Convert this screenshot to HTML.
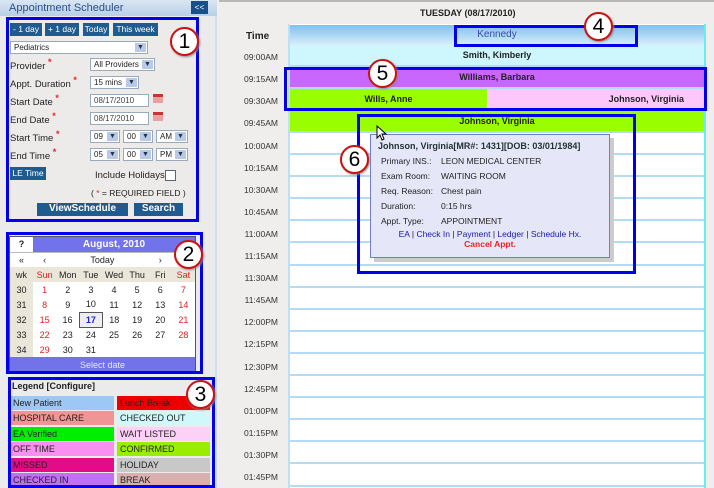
<!DOCTYPE html>
<html><head><meta charset="utf-8"><style>
*{margin:0;padding:0;box-sizing:border-box}
body{width:714px;height:488px;overflow:hidden;position:relative;background:#efeeec;font-family:"Liberation Sans",Arial,sans-serif;font-size:9px;color:#222}
.a{position:absolute}
.btn{position:absolute;background:#1f5b8f;color:#fff;font-size:8.5px;text-align:center;line-height:12px;height:13px}
.sel{position:absolute;background:#fff;border:1px solid #9ab;height:13px;font-size:8px;line-height:11px;padding-left:3px}
.sel i{position:absolute;right:1px;top:1px;width:11px;height:9px;background:#b9c9e8;font-style:normal;font-size:7px;line-height:9px;text-align:center;color:#234}
.lbl{position:absolute;left:10px;font-size:9.5px;color:#222}
.lbl b{color:#e22;font-size:9px;position:relative;top:-4px}
.bx{position:absolute;border:3px solid #0000ee}
.num{position:absolute;width:29px;height:29px;border-radius:50%;background:#fff;border:2px solid #c11;color:#000;font-size:21px;text-align:center;line-height:25px;box-shadow:1px 1px 2px #888}
.row{position:absolute;left:290px;width:414px;height:22px;background:#fff;border-bottom:2px solid #b2dcf2}
.tm{position:absolute;left:230px;width:48px;text-align:right;font-size:8.5px;color:#333}
.cal{table-layout:fixed}
.cal td{border:0;text-align:center;font-size:9px;height:15px;background:#fff}
.cal td.w{background:#ebe6da}
.lg{position:absolute;height:14px;font-size:9px;line-height:14px;padding-left:3px;color:#222}
.tt td{font-size:8.5px;height:15px;color:#222}
a{color:#1a1aa8}
</style></head><body>
<div class="a" style="left:0;top:0;width:217px;height:488px;background:#ebebeb;border-right:2px solid #cfe0ef"></div>
<div class="a" style="left:0;top:0;width:217px;height:16px;background:linear-gradient(#d9e7f4,#b8cfe6);color:#2b4f8c;font-size:11px;line-height:16px;padding-left:9px">Appointment Scheduler</div>
<div class="btn" style="left:191px;top:1px;width:17px;height:13px;background:#17508a">&lt;&lt;</div>
<div class="a" style="left:6px;top:17px;width:192px;height:205px;background:#ecebea"></div>
<div class="btn" style="left:10px;top:23px;width:32px">- 1 day</div>
<div class="btn" style="left:45px;top:23px;width:34px">+ 1 day</div>
<div class="btn" style="left:83px;top:23px;width:26px">Today</div>
<div class="btn" style="left:113px;top:23px;width:45px">This week</div>
<div class="sel" style="left:10px;top:41px;width:138px">Pediatrics<i>▼</i></div>
<div class="lbl" style="top:61px">Provider <b>*</b></div>
<div class="sel" style="left:90px;top:58px;width:65px">All Providers<i>▼</i></div>
<div class="lbl" style="top:79px">Appt. Duration <b>*</b></div>
<div class="sel" style="left:90px;top:76px;width:49px">15 mins<i>▼</i></div>
<div class="lbl" style="top:97px">Start Date <b>*</b></div>
<div class="sel" style="left:90px;top:94px;width:59px;color:#444">08/17/2010</div>
<div class="a" style="left:153px;top:94px;width:10px;height:9px;background:#e8a0a0;border-top:3px solid #c33"></div>
<div class="lbl" style="top:115px">End Date <b>*</b></div>
<div class="sel" style="left:90px;top:112px;width:59px;color:#444">08/17/2010</div>
<div class="a" style="left:153px;top:112px;width:10px;height:9px;background:#e8a0a0;border-top:3px solid #c33"></div>
<div class="lbl" style="top:133px">Start Time <b>*</b></div>
<div class="sel" style="left:90px;top:130px;width:30px">09<i>▼</i></div>
<div class="sel" style="left:123px;top:130px;width:30px">00<i>▼</i></div>
<div class="sel" style="left:156px;top:130px;width:32px">AM<i>▼</i></div>
<div class="lbl" style="top:151px">End Time <b>*</b></div>
<div class="sel" style="left:90px;top:148px;width:30px">05<i>▼</i></div>
<div class="sel" style="left:123px;top:148px;width:30px">00<i>▼</i></div>
<div class="sel" style="left:156px;top:148px;width:32px">PM<i>▼</i></div>
<div class="btn" style="left:10px;top:167px;width:36px">LE Time</div>
<div class="a" style="left:95px;top:170px;font-size:9.5px">Include Holidays</div>
<div class="a" style="left:165px;top:170px;width:11px;height:11px;border:1px solid #567;background:#fff"></div>
<div class="a" style="left:91px;top:188px;font-size:8.5px">( <span style="color:#e22">*</span> = REQUIRED FIELD )</div>
<div class="btn" style="left:37px;top:203px;width:91px;font-weight:bold;font-size:10px">ViewSchedule</div>
<div class="btn" style="left:134px;top:203px;width:49px;font-weight:bold;font-size:10px">Search</div>
<div class="bx" style="left:6px;top:17px;width:193px;height:205px"></div>
<div class="num" style="left:170px;top:27px">1</div>

<div class="a" style="left:9px;top:236px;width:187px;height:136px;background:#fff;border:1px solid #555">
<table class="cal" style="border-collapse:collapse;width:185px;height:134px">
<colgroup><col style="width:23px"><col><col><col><col><col><col><col></colgroup>
<tr><td style="font-weight:bold">?</td><td colspan="7" style="background:#7272ea;color:#fff;font-weight:bold;font-size:10px">August, 2010</td></tr>
<tr style="border-top:1px solid #bbb"><td>«</td><td>‹</td><td colspan="4">Today</td><td>›</td><td>»</td></tr>
<tr><td class="w">wk</td><td class="w" style="color:#d22">Sun</td><td class="w">Mon</td><td class="w">Tue</td><td class="w">Wed</td><td class="w">Thu</td><td class="w">Fri</td><td class="w" style="color:#d22">Sat</td></tr>
<tr><td class="w">30</td><td style="color:#d22">1</td><td>2</td><td>3</td><td>4</td><td>5</td><td>6</td><td style="color:#d22">7</td></tr>
<tr><td class="w">31</td><td style="color:#d22">8</td><td>9</td><td>10</td><td>11</td><td>12</td><td>13</td><td style="color:#d22">14</td></tr>
<tr><td class="w">32</td><td style="color:#d22">15</td><td>16</td><td style="color:#22c;font-weight:bold;background:#eee;border:1px solid #555">17</td><td>18</td><td>19</td><td>20</td><td style="color:#d22">21</td></tr>
<tr><td class="w">33</td><td style="color:#d22">22</td><td>23</td><td>24</td><td>25</td><td>26</td><td>27</td><td style="color:#d22">28</td></tr>
<tr><td class="w">34</td><td style="color:#d22">29</td><td>30</td><td>31</td><td></td><td></td><td></td><td></td></tr>
<tr><td colspan="8" style="background:#7272ea;color:#e8e8ff">Select date</td></tr>
</table></div>
<div class="bx" style="left:6px;top:232px;width:197px;height:142px"></div>
<div class="num" style="left:174px;top:240px">2</div>

<div class="a" style="left:12px;top:381px;font-weight:bold;font-size:9px">Legend [Configure]</div>
<div class="lg" style="left:10px;top:396px;width:104px;background:#9dc8f5">New Patient</div>
<div class="lg" style="left:117px;top:396px;width:93px;background:#ee0000">Lunch Break</div>
<div class="lg" style="left:10px;top:411px;width:104px;background:#f09595">HOSPITAL CARE</div>
<div class="lg" style="left:117px;top:411px;width:93px;background:#d0f8fb">CHECKED OUT</div>
<div class="lg" style="left:10px;top:427px;width:104px;background:#00ee00">EA Verified</div>
<div class="lg" style="left:117px;top:427px;width:93px;background:#fdd0f7">WAIT LISTED</div>
<div class="lg" style="left:10px;top:442px;width:104px;background:#f98ff0">OFF TIME</div>
<div class="lg" style="left:117px;top:442px;width:93px;background:#99ee00">CONFIRMED</div>
<div class="lg" style="left:10px;top:458px;width:104px;background:#e40a88">MISSED</div>
<div class="lg" style="left:117px;top:458px;width:93px;background:#c8c8c8">HOLIDAY</div>
<div class="lg" style="left:10px;top:473px;width:104px;background:#c070f0">CHECKED IN</div>
<div class="lg" style="left:117px;top:473px;width:93px;background:#d8b0b0">BREAK</div>
<div class="bx" style="left:8px;top:377px;width:207px;height:111px"></div>
<div class="num" style="left:186px;top:380px">3</div>

<div class="a" style="left:219px;top:0;width:495px;height:2px;background:#b8b8b8"></div>
<div class="a" style="left:420px;top:8px;font-weight:bold;font-size:9px">TUESDAY (08/17/2010)</div>
<div class="a" style="left:288px;top:24px;width:418px;height:464px;background:#fff;border-left:2px solid #bde0f2;border-right:2px solid #6ee"></div>
<div class="a" style="left:290px;top:25px;width:414px;height:20px;background:linear-gradient(#7fc0ee,#d8eefa);color:#3a4aa8;text-align:center;font-size:10px;line-height:20px">Kennedy</div>
<div class="a" style="left:246px;top:31px;font-weight:bold;font-size:10px">Time</div>

<div class="row" style="top:45px;background:#cdf7fc;text-align:center;font-weight:bold;line-height:20px">Smith, Kimberly</div>
<div class="row" style="top:67px;background:#c966fb;text-align:center;font-weight:bold;line-height:20px">Williams, Barbara</div>
<div class="row" style="top:89px;background:#fcc8fb;font-weight:bold;line-height:20px"><span class="a" style="left:0;top:0;width:197px;height:20px;background:#99ff00;text-align:center">Wills, Anne</span><span class="a" style="right:20px">Johnson, Virginia</span></div>
<div class="row" style="top:111px;background:#99ff00;text-align:center;font-weight:bold;line-height:20px">Johnson, Virginia</div>
<div class="row" style="top:133px"></div><div class="row" style="top:155px"></div><div class="row" style="top:177px"></div><div class="row" style="top:199px"></div><div class="row" style="top:221px"></div><div class="row" style="top:244px"></div><div class="row" style="top:266px"></div><div class="row" style="top:288px"></div><div class="row" style="top:310px"></div><div class="row" style="top:332px"></div><div class="row" style="top:354px"></div><div class="row" style="top:376px"></div><div class="row" style="top:398px"></div><div class="row" style="top:420px"></div><div class="row" style="top:442px"></div><div class="row" style="top:465px"></div>

<div class="tm" style="top:52px">09:00AM</div><div class="tm" style="top:74px">09:15AM</div><div class="tm" style="top:96px">09:30AM</div><div class="tm" style="top:118px">09:45AM</div><div class="tm" style="top:141px">10:00AM</div><div class="tm" style="top:163px">10:15AM</div><div class="tm" style="top:185px">10:30AM</div><div class="tm" style="top:207px">10:45AM</div><div class="tm" style="top:229px">11:00AM</div><div class="tm" style="top:251px">11:15AM</div><div class="tm" style="top:273px">11:30AM</div><div class="tm" style="top:295px">11:45AM</div><div class="tm" style="top:317px">12:00PM</div><div class="tm" style="top:339px">12:15PM</div><div class="tm" style="top:362px">12:30PM</div><div class="tm" style="top:384px">12:45PM</div><div class="tm" style="top:406px">01:00PM</div><div class="tm" style="top:428px">01:15PM</div><div class="tm" style="top:450px">01:30PM</div><div class="tm" style="top:472px">01:45PM</div>

<div class="a" style="left:374px;top:138px;width:240px;height:124px;background:#ccc"></div>
<div class="a" style="left:370px;top:134px;width:240px;height:124px;background:#e5e7f8;border:1px solid #6f80c0;padding:6px 0 0 7px">
<div style="font-weight:bold;color:#233;font-size:9px;margin-bottom:2px">Johnson, Virginia[MR#: 1431][DOB: 03/01/1984]</div>
<table class="tt" style="border-collapse:collapse;margin-left:3px">
<tr><td style="width:60px">Primary INS.:</td><td>LEON MEDICAL CENTER</td></tr>
<tr><td>Exam Room:</td><td>WAITING ROOM</td></tr>
<tr><td>Req. Reason:</td><td>Chest pain</td></tr>
<tr><td>Duration:</td><td>0:15 hrs</td></tr>
<tr><td>Appt. Type:</td><td>APPOINTMENT</td></tr>
</table>
<div style="text-align:center;font-size:8.5px;margin-top:1px;margin-left:-7px"><a>EA</a> | <a>Check In</a> | <a>Payment</a> | <a>Ledger</a> | <a>Schedule Hx.</a></div>
<div style="text-align:center;font-size:8.5px;font-weight:bold;margin-left:-7px"><a style="color:#e22">Cancel Appt.</a></div>
</div>
<svg class="a" style="left:376px;top:125px" width="12" height="16" viewBox="0 0 12 16"><path d="M1 1 L1 13 L4 10 L6 15 L8 14 L6 9 L10 9 Z" fill="#fff" stroke="#000" stroke-width="1"/></svg>

<div class="bx" style="left:454px;top:25px;width:184px;height:22px"></div>
<div class="num" style="left:584px;top:12px">4</div>
<div class="bx" style="left:284px;top:67px;width:423px;height:44px"></div>
<div class="num" style="left:368px;top:59px">5</div>
<div class="bx" style="left:357px;top:114px;width:279px;height:160px"></div>
<div class="num" style="left:340px;top:145px">6</div>
</body></html>
